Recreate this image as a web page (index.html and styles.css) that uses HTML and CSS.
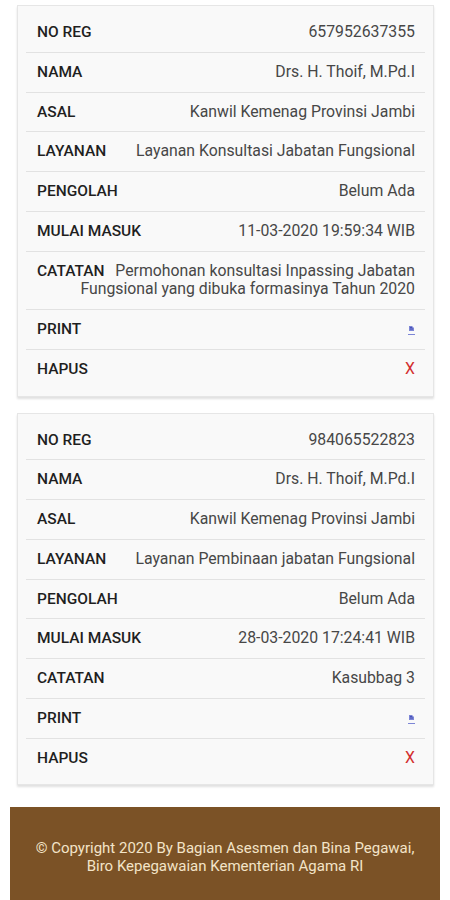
FILE: index.html
```html
<!DOCTYPE html>
<html lang="en">
<head>
  <meta charset="UTF-8">
  <meta name="viewport" content="width=device-width, initial-scale=1.0">
  <title>Riwayat Layanan</title>
  <link rel="stylesheet" href="styles.css">
</head>
<body>
  <div class="list">
    <div class="card">
      <div class="row"><span class="label">NO REG</span>657952637355</div>
      <div class="row"><span class="label">NAMA</span>Drs. H. Thoif, M.Pd.I</div>
      <div class="row"><span class="label">ASAL</span>Kanwil Kemenag Provinsi Jambi</div>
      <div class="row"><span class="label">LAYANAN</span>Layanan Konsultasi Jabatan Fungsional</div>
      <div class="row"><span class="label">PENGOLAH</span>Belum Ada</div>
      <div class="row"><span class="label">MULAI MASUK</span>11-03-2020 19:59:34 WIB</div>
      <div class="row"><span class="label">CATATAN</span>Permohonan konsultasi Inpassing Jabatan<br>Fungsional yang dibuka formasinya Tahun 2020</div>
      <div class="row"><span class="label">PRINT</span><a class="print" href="#"><svg width="7" height="9" viewBox="0 0 7 9"><path d="M1 1h3l2 2v3H1z" fill="#7d86d6"/><path d="M2 2.5h2M2 4h3" stroke="#3b45b0" stroke-width="0.8"/></svg></a></div>
      <div class="row"><span class="label">HAPUS</span><a class="delete" href="#">X</a></div>
    </div>

    <div class="card">
      <div class="row"><span class="label">NO REG</span>984065522823</div>
      <div class="row"><span class="label">NAMA</span>Drs. H. Thoif, M.Pd.I</div>
      <div class="row"><span class="label">ASAL</span>Kanwil Kemenag Provinsi Jambi</div>
      <div class="row"><span class="label">LAYANAN</span>Layanan Pembinaan jabatan Fungsional</div>
      <div class="row"><span class="label">PENGOLAH</span>Belum Ada</div>
      <div class="row"><span class="label">MULAI MASUK</span>28-03-2020 17:24:41 WIB</div>
      <div class="row"><span class="label">CATATAN</span>Kasubbag 3</div>
      <div class="row"><span class="label">PRINT</span><a class="print" href="#"><svg width="7" height="9" viewBox="0 0 7 9"><path d="M1 1h3l2 2v3H1z" fill="#7d86d6"/><path d="M2 2.5h2M2 4h3" stroke="#3b45b0" stroke-width="0.8"/></svg></a></div>
      <div class="row"><span class="label">HAPUS</span><a class="delete" href="#">X</a></div>
    </div>
  </div>

  <footer class="footer">
    © Copyright 2020 By Bagian Asesmen dan Bina Pegawai,<br>
    Biro Kepegawaian Kementerian Agama RI
  </footer>
</body>
</html>
```

FILE: styles.css
```css
body { margin: 0; background: #fff; font-family: Roboto, "Liberation Sans", Arial, sans-serif; font-size: 15.5px; color: #333; }
.list { display: flex; flex-direction: column; gap: 16px; padding: 5px 16px 0 17px; }
.card { background: #f9f9f9; border: 1px solid #e6e6e6; box-shadow: 0 2px 2px rgba(0,0,0,0.12); padding: 7px 8px; }
.row { display: flow-root; text-align: right; padding: 10px 10px 10px 11px; font-size: 15.8px; line-height: 18.75px; color: #474747; border-top: 1px solid #e2e2e2; }
.row:first-child { border-top: none; }
.label { float: left; margin-right: 9px; white-space: nowrap; font-size: 15.5px; font-weight: 500; color: #1f1f1f; }
.print { display: inline-block; vertical-align: middle; border-bottom: 1px solid #7d86d6; line-height: 10px; }
.print svg { display: block; }
.delete { color: #d32f2f; text-decoration: none; }
.footer { margin: 22px 10px 0; padding: 32px 20px; background: #7b5226; color: #f3e4c8; font-size: 15px; line-height: 18px; text-align: center; }
```
